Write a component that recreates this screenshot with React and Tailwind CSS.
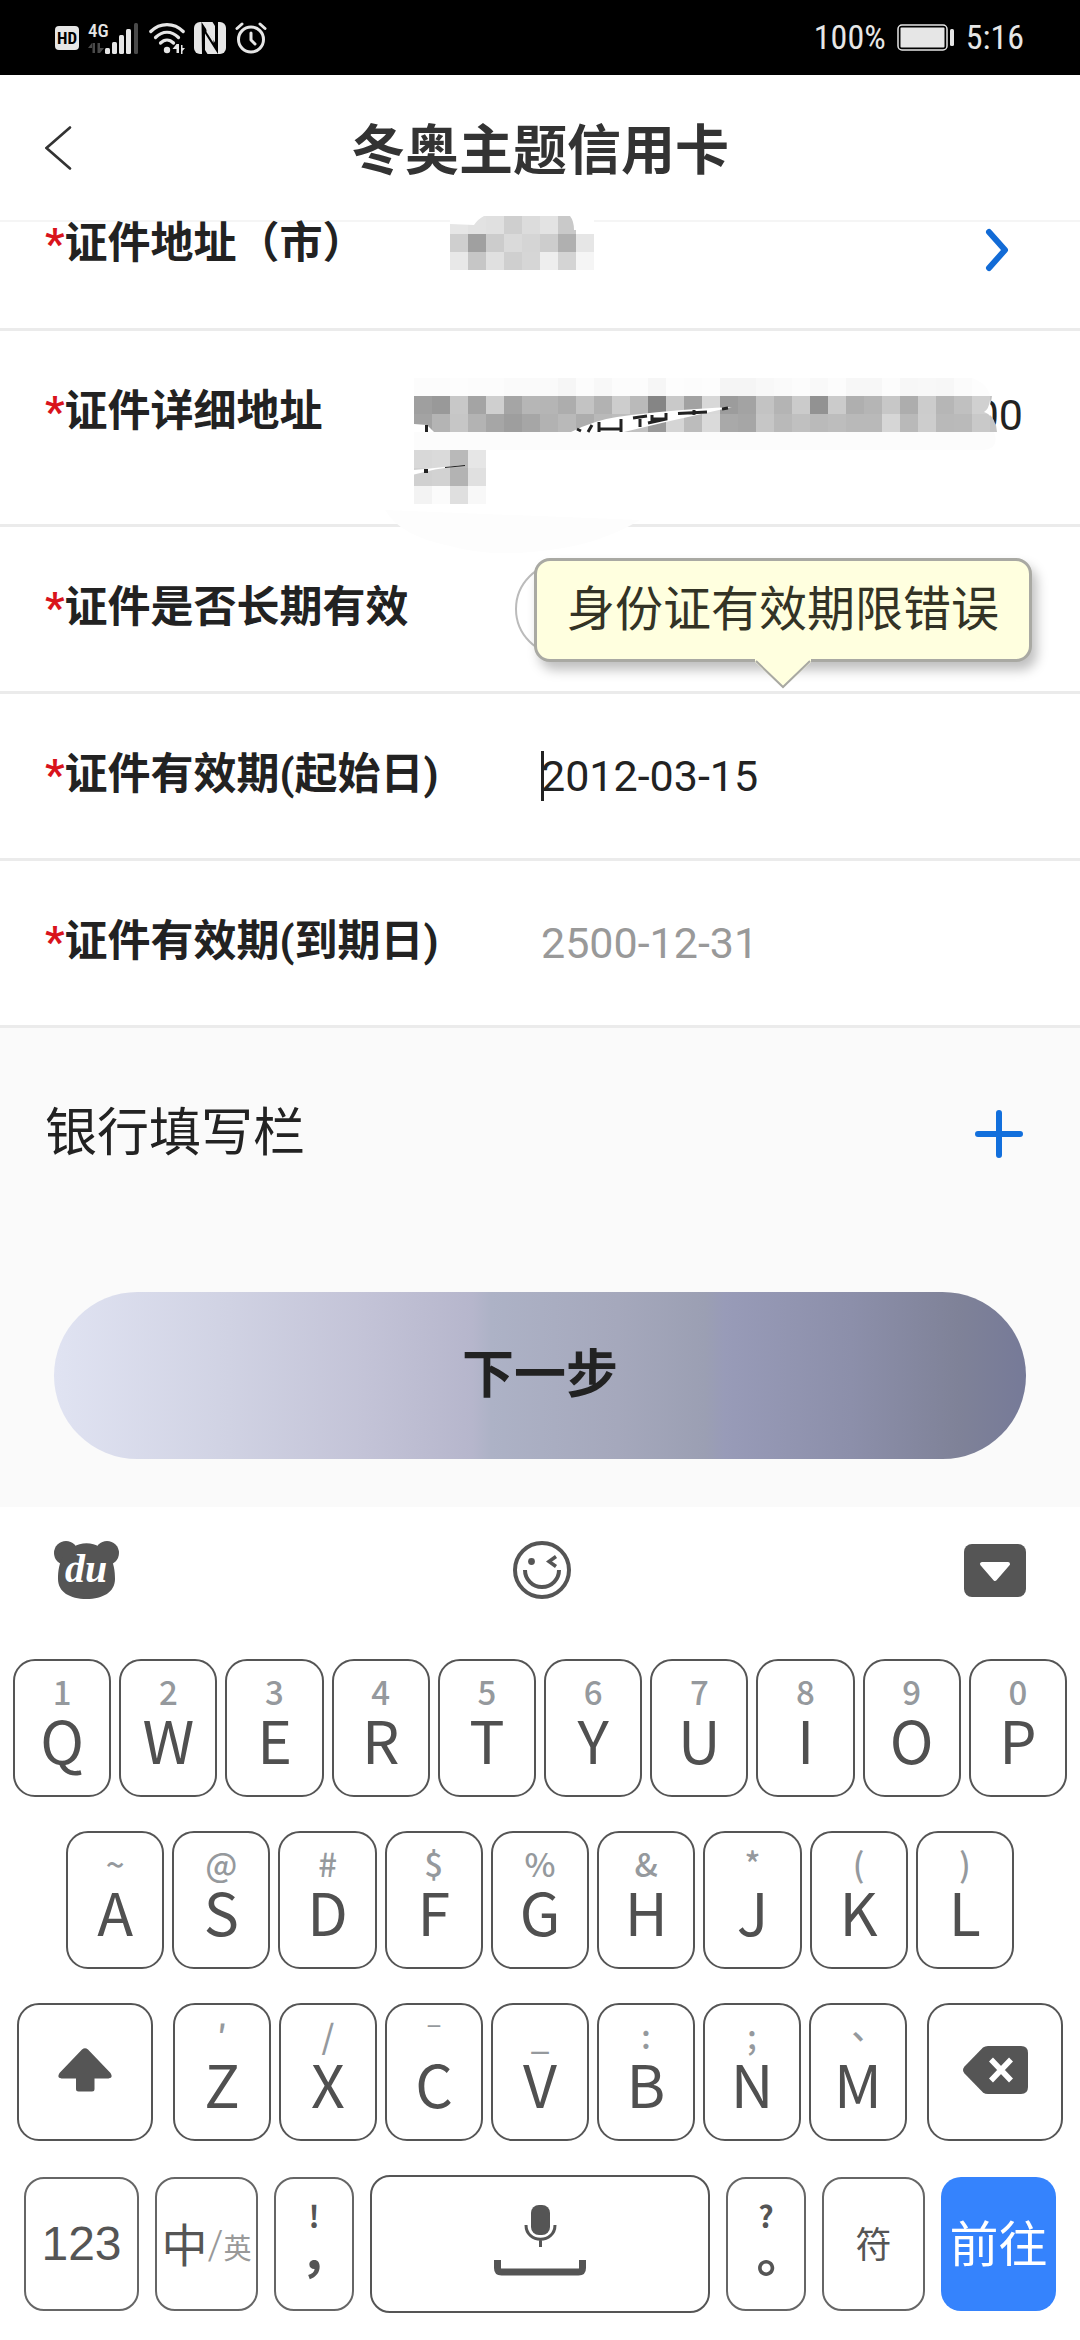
import React, { useState } from 'react';

const topKeys = [
  ['Q', '1'], ['W', '2'], ['E', '3'], ['R', '4'], ['T', '5'],
  ['Y', '6'], ['U', '7'], ['I', '8'], ['O', '9'], ['P', '0'],
];
const middleKeys = [
  ['A', '~'], ['S', '@'], ['D', '#'], ['F', '$'], ['G', '%'],
  ['H', '&'], ['J', '*'], ['K', '('], ['L', ')'],
];
const bottomKeys = [
  ['Z', '′'], ['X', '/'], ['C', 'ˉ'], ['V', '_'], ['B', ':'], ['N', ';'], ['M', '、'],
];

// grey shades of the masked values, one list per mosaic line
const cityMask = [
  ['e6', 'e2', 'e0', 'cf', 'dc', 'e3', 'c9'],
  ['cf', 'a0', 'cc', 'da', 'd5', 'cd', 'b0', 'e6'],
  ['e8', 'c6', 'e0', 'cf', 'd6', 'ee', 'd4', 'f5'],
];
const addressMask = [
  ['fc', 'fc', 'fd', 'fc', 'fc', 'fa', 'fa', 'fa', 'f6', 'fc', 'f8', 'fc', 'fc', 'f6', 'fd', 'fc', 'fd', 'f5', 'f5', 'f8', 'fa', 'fc', 'f9', 'fc', 'f7', 'f7', 'fc', 'f7', 'f8', 'f7', 'fb', 'fd'],
  ['9f', '99', 'c8', 'a4', 'cf', 'a5', 'b6', 'b5', 'ad', 'c3', 'b2', 'cd', 'ba', '85', 'c9', 'a2', 'd8', '9c', 'a3', 'c3', 'b4', 'cb', '92', 'cb', 'af', 'b5', 'c7', 'ad', 'cc', 'b6', 'c0', 'd0'],
  ['a3', 'b4', 'c6', 'b3', 'a6', '9e', 'a6', 'b2', 'b9', 'ad', 'b9', 'bd', 'c0', '99', 'd5', 'bc', 'da', 'a9', 'a6', 'c6', 'b9', 'c0', 'ba', 'bd', 'b9', 'b9', 'd6', 'b9', 'cd', 'b9', 'ba', 'c9'],
];
const addressMaskTail = [
  ['d8', 'da', 'b9', 'e6'],
  ['d0', 'd2', 'b3', 'e0'],
  ['f3', 'fb', 'df', 'f8'],
];

const Mosaic = ({ lines, x = 0, y = 0 }) =>
  lines.map((line, r) =>
    line.map((shade, c) => (
      <rect
        key={`${r}-${c}`}
        x={x + c * 18}
        y={y + r * 18}
        width="18"
        height="18"
        fill={`#${shade}${shade}${shade}`}
        shapeRendering="crispEdges"
      />
    ))
  );

const StatusBar = () => (
  <div className="flex h-[75px] items-center justify-between bg-black pr-14 pl-[55px] font-['Roboto_Condensed',Roboto,sans-serif] text-[#e6e6e6]">
    <div className="flex items-center gap-[9px]">
      <span className="flex h-6 w-6 items-center justify-center rounded-[4px] bg-[#e6e6e6] text-[17px] leading-[24px] font-bold text-black">
        HD
      </span>
      <svg className="h-8 w-[52px] overflow-visible" viewBox="0 0 52 32" fill="#e6e6e6">
        <text x="0" y="15" fontSize="19" fontWeight="500">4G</text>
        <path d="M4.5 21v10H7V21zM4 21l-4 5h4zM9.500 21v10H12V21zM12 31l4-5h-4z" fill="#4a4a4a" />
        <rect x="17" y="26" width="5" height="6" rx="1.500" />
        <rect x="24" y="20" width="5" height="12" rx="1.500" />
        <rect x="31" y="13" width="5" height="19" rx="1.500" />
        <rect x="38" y="7" width="5" height="25" rx="1.500" />
        <rect x="46" y="1" width="4" height="31" rx="1.500" fill="#4a4a4a" />
      </svg>
      <svg className="h-8 w-9" viewBox="0 0 36 32" fill="none" stroke="#e6e6e6" strokeWidth="3.200" strokeLinecap="round">
        <path d="M1.800 9.500C11 .3 25 .3 34.200 9.500" />
        <path d="M6.500 15.500c7-7 16-7 23 0" />
        <path d="M11.500 21c4-4 9-4 13 0" />
        <circle cx="18" cy="28" r="3.200" fill="#e6e6e6" stroke="none" />
        <path d="M27.500 22v9H30v-9zM27.500 22l-4 5h4zM32 23v9h1.500v-3L36 26h-2.500v-3z" fill="#e6e6e6" stroke="none" />
      </svg>
      <svg className="h-8 w-8" viewBox="0 0 32 32">
        <rect width="32" height="32" rx="6" fill="#e6e6e6" />
        <path d="M7.500 0L21 20.500V4l-2.500-4H24v32L11 11.500V28l2.500 4H8z" fill="#000" />
        <path d="M12.500 6.500v3.500l7 11v-3.500z" fill="#e6e6e6" />
      </svg>
      <svg className="h-8 w-8" viewBox="0 0 32 32" fill="none" stroke="#e6e6e6" strokeWidth="3" strokeLinecap="round" strokeLinejoin="round">
        <circle cx="16" cy="17.500" r="12.500" />
        <path d="M16 11v7l4 4M2 6.500l5-4.500M30 6.500L25 2" />
      </svg>
    </div>
    <div className="flex items-center gap-[11px] text-[34px]">
      <span>100%</span>
      <svg className="h-[27px] w-[58px]" viewBox="0 0 58 27">
        <rect x="1" y="1" width="49" height="25" rx="4" fill="none" stroke="#e6e6e6" strokeWidth="1.500" />
        <rect x="3.500" y="3.500" width="44" height="20" rx="1" fill="#e6e6e6" />
        <rect x="53" y="5" width="4" height="17" rx="1.500" fill="#e6e6e6" />
      </svg>
      <span>5:16</span>
    </div>
  </div>
);

const FieldLabel = ({ htmlFor, children }) => (
  <label htmlFor={htmlFor} className="pb-1 text-[43px] leading-[50px] font-bold whitespace-nowrap text-[#222]">
    <span className="text-[#d9131c]">*</span>
    {children}
  </label>
);

const LetterKey = ({ letter, hint }) => (
  <button
    type="button"
    aria-label={letter}
    className="flex h-[138px] min-w-0 flex-1 flex-col items-center rounded-[22px] border-2 border-[#555] bg-white pt-3"
  >
    <span className="h-9 font-['Noto_Sans_CJK_TC',sans-serif] text-[33px] leading-[36px] font-medium text-[#95999d]">{hint}</span>
    <span className="font-['Noto_Sans_CJK_SC',sans-serif] text-[59px] leading-[60px] text-[#505050]">{letter}</span>
  </button>
);

const SideKey = ({ label, children }) => (
  <button
    type="button"
    aria-label={label}
    className="flex h-[138px] items-center justify-center rounded-[22px] border-2 border-[#555] bg-white"
  >
    {children}
  </button>
);

const smallKey = 'flex h-[134px] items-center justify-center rounded-[20px] border-2 border-[#666] bg-white text-[#555]';

const Keyboard = () => (
  <section className="bg-white pb-[27px]">
    <div className="flex items-center justify-between px-[54px] pt-[34px] pb-[60px]">
      <button type="button" aria-label="百度输入法">
        <svg className="h-[58px] w-[65px]" viewBox="0 0 65 58">
          <g fill="#555">
            <circle cx="12" cy="12" r="12" />
            <circle cx="53" cy="12" r="12" />
            <path d="M20 6C26 1 39 1 45 6l10 8c5 8 6 16 6 24 0 13-12 20-28.500 20S4 51 4 38c0-8 1-16 6-24z" />
          </g>
          <text
            x="32"
            y="41"
            textAnchor="middle"
            fill="#fff"
            fontFamily="'Liberation Serif', serif"
            fontSize="40"
            fontWeight="bold"
            fontStyle="italic"
          >
            du
          </text>
        </svg>
      </button>
      <button type="button" aria-label="表情">
        <svg className="h-[58px] w-[58px]" viewBox="0 0 58 58" fill="none" stroke="#555" strokeWidth="4">
          <circle cx="29" cy="29" r="27" />
          <path d="M12 29c0 9 7 17 17 17s17-8 17-17" />
          <path d="M43 15.500l-7 5 7 5" strokeWidth="3.500" />
          <circle cx="18.500" cy="20.500" r="3.400" fill="#555" stroke="none" />
        </svg>
      </button>
      <button type="button" aria-label="收起键盘">
        <svg className="h-[53px] w-[62px]" viewBox="0 0 62 53">
          <rect width="62" height="53" rx="8" fill="#555" />
          <path d="M18 20h26L31 35z" fill="#fff" stroke="#fff" strokeWidth="4" strokeLinejoin="round" />
        </svg>
      </button>
    </div>

    <div className="flex flex-col gap-[34px]">
      <div className="flex gap-2 px-[13px]">
        {topKeys.map(([letter, hint]) => <LetterKey key={letter} letter={letter} hint={hint} />)}
      </div>
      <div className="flex gap-2 px-[66px]">
        {middleKeys.map(([letter, hint]) => <LetterKey key={letter} letter={letter} hint={hint} />)}
      </div>
      <div className="grid grid-cols-[136fr_734fr_136fr] gap-5 px-[17px]">
        <SideKey label="大写">
          <svg className="mb-1 h-[44px] w-[54px]" viewBox="0 0 54 44" fill="#555">
            <path d="M24 1.500q3-2.500 6 0L52.500 25q3 5-2 5.500H36.500V41q0 2.500-2.500 2.500H20.500Q18 43.500 18 41V30.500H3.500q-5-.5-2-5.500z" />
          </svg>
        </SideKey>
        <div className="flex gap-2">
          {bottomKeys.map(([letter, hint]) => <LetterKey key={letter} letter={letter} hint={hint} />)}
        </div>
        <SideKey label="删除">
          <svg className="mb-1 h-[48px] w-[65px]" viewBox="0 0 65 48">
            <path d="M20 1.500Q22 0 25 0h33q7 0 7 7v34q0 7-7 7H25q-3 0-5-1.500L1.500 27.500q-3-3.500 0-7z" fill="#555" />
            <path d="M28 13.500l20 21M48 13.500l-20 21" stroke="#fff" strokeWidth="5.500" />
          </svg>
        </SideKey>
      </div>
      <div className="grid grid-cols-[115fr_103fr_80fr_340fr_80fr_103fr_115fr] items-center gap-4 px-6">
        <button type="button" className={`${smallKey} font-['Liberation_Sans',sans-serif] text-[48px]`}>123</button>
        <button type="button" className={`${smallKey} pt-1 text-[46px]`}>
          中<span className="text-[40px] font-light text-[#999]">/</span>
          <span className="pt-2 text-[28px] text-[#999]">英</span>
        </button>
        <button type="button" className={`${smallKey} flex-col pb-2 font-['Noto_Sans_CJK_TC',sans-serif] font-bold`}>
          <span className="text-[30px] leading-[50px]">!</span>
          <span className="text-[50px] leading-[50px]">，</span>
        </button>
        <button
          type="button"
          aria-label="空格"
          className="flex h-[138px] items-center justify-center rounded-[20px] border-2 border-[#555] bg-white pb-2"
        >
          <svg className="h-[72px] w-[92px]" viewBox="0 0 92 72" fill="none" stroke="#555">
            <rect x="37" y="1" width="19" height="30" rx="8" fill="#555" stroke="none" />
            <path d="M32 21c0 19 29 19 29 0M46.500 35v8" strokeWidth="3" />
            <path d="M3.500 56v8q0 4 4 4h77q4 0 4-4v-8" strokeWidth="7" />
          </svg>
        </button>
        <button type="button" className={`${smallKey} flex-col pb-2 font-['Noto_Sans_CJK_TC',sans-serif] font-bold`}>
          <span className="text-[30px] leading-[50px]">?</span>
          <span className="text-[50px] leading-[50px]">。</span>
        </button>
        <button type="button" className={`${smallKey} pt-1 text-[36px]`}>符</button>
        <button type="button" className="flex h-[134px] items-center justify-center rounded-[20px] bg-[#3583fd] pt-1 text-[49px] whitespace-nowrap text-white">
          前往
        </button>
      </div>
    </div>
  </section>
);

const App = () => {
  const [startDate, setStartDate] = useState('2012-03-15');
  const [endDate, setEndDate] = useState('2500-12-31');

  return (
    <div className="min-h-screen bg-white font-[Roboto,'Noto_Sans_CJK_SC',sans-serif]">
      <StatusBar />

      <header className="grid h-[147px] grid-cols-[1fr_auto_1fr] items-center border-b-2 border-[#f5f5f5] px-[45px]">
        <button type="button" aria-label="返回" className="justify-self-start">
          <svg className="h-[44px] w-[27px]" viewBox="0 0 27 44" fill="none" stroke="#333" strokeWidth="2.600" strokeLinecap="round">
            <path d="M25 1.500L1.500 22 25 42.500" />
          </svg>
        </button>
        <h1 className="pt-2 text-[54px] leading-[64px] font-bold text-[#333]">冬奥主题信用卡</h1>
      </header>

      <form>
        <div className="flex h-[109px] items-start border-b-3 border-[#ebebeb] pr-[71px] pl-[45px]">
          <div className="-mt-1 w-[405px] shrink-0">
            <FieldLabel htmlFor="city">证件地址（市）</FieldLabel>
          </div>
          <button id="city" type="button" aria-label="选择证件地址（市）" className="flex flex-1 items-start justify-between">
            <svg className="-mt-[6px] h-[54px] w-36" viewBox="0 0 144 54">
              <Mosaic lines={cityMask} />
              <path d="M0 0h34q-6 3-10 9L0 8zM122 0h22v14h-20q0-9-4-14z" fill="#fff" />
            </svg>
            <svg className="mt-[6px] h-[44px] w-[24px]" viewBox="0 0 24 44" fill="none" stroke="#126bd6" strokeWidth="6" strokeLinecap="round" strokeLinejoin="round">
              <path d="M4 4l16 18L4 40" />
            </svg>
          </button>
        </div>

        <div className="relative flex h-[196px] items-start border-b-3 border-[#ebebeb] px-[45px] pt-[55px]">
          <FieldLabel htmlFor="address">证件详细地址</FieldLabel>
          <input
            id="address"
            defaultValue="00"
            className="ml-[80px] min-w-0 flex-1 bg-transparent pr-[12px] text-right text-[43px] leading-[58px] text-[#222] outline-none"
          />
          <svg className="absolute top-[47px] left-[385px] h-[180px] w-[640px]" viewBox="385 378 640 180">
            <path d="M385 510l255 10q-40 24-90 30-60 8-100-4-50-10-65-36z" fill="#fdfdfd" />
            <path d="M414 432h580q6 16-10 18H414z" fill="#fcfcfc" />
            <path d="M970 396h22q-1 10-6 16 10 6 11 20h-27z" fill="#c4c4c4" />
            <Mosaic lines={addressMask} x={414} y={378} />
            <path d="M990 378h-18q16 6 18 18zM990 400q-1 9-6 12 5 2 6 4z" fill="#fff" />
            <Mosaic lines={addressMaskTail} x={414} y={450} />
            <path d="M414 424l13 1 7 7h-20z" fill="#fff" />
            <path d="M571 432q24-12 46-15 50-7 115-10-30 7-62 14l-46 11z" fill="#fff" />
            <g fill="none" stroke="#222" strokeWidth="3">
              <path d="M426.500 425v7M577 429l4 2M592 425l-4 7M599 422v10M599 429h22M621 419v13" />
              <path d="M633 418l14-2M640 417v10M648 423l18-4v-6M652 415v9M653 419h13" />
              <path d="M678 413.500l29-1.500M694 410v5M722 409l6-1" />
            </g>
            <path d="M414 470l51-5-30 4.500-21 5z" fill="#fff" />
            <path d="M424 469h4v4h-4zM445 467l20-2v1l-20 2z" fill="#222" />
          </svg>
        </div>

        <div className="relative flex h-[167px] items-center border-b-3 border-[#ebebeb] px-[45px]">
          <FieldLabel htmlFor="longTerm">证件是否长期有效</FieldLabel>
          <input
            id="longTerm"
            type="checkbox"
            role="switch"
            className="ml-auto mr-[390px] h-[94px] w-[130px] shrink-0 appearance-none rounded-full border-2 border-[#bbb] bg-white"
          />
          <div
            role="alert"
            className="absolute top-[31px] right-12 z-10 rounded-2xl border-3 border-[#a9a9a3] bg-[#ffffdf] px-[30px] py-[19px] text-[48px] leading-[60px] whitespace-nowrap text-[#333325] shadow-[5px_8px_12px_rgba(0,0,0,0.25)]"
          >
            身份证有效期限错误
            <svg className="absolute top-full left-1/2 h-[30px] w-[56px] -translate-x-1/2" viewBox="0 0 56 30">
              <path d="M0 0h56v3L28 29 0 3z" fill="#ffffdf" />
              <path d="M1 2l27 26L55 2" fill="none" stroke="#a9a9a3" strokeWidth="2" />
            </svg>
          </div>
        </div>

        <div className="flex h-[167px] items-center border-b-3 border-[#ebebeb] px-[45px]">
          <div className="flex w-[496px] shrink-0">
            <FieldLabel htmlFor="startDate">证件有效期(起始日)</FieldLabel>
          </div>
          <div className="relative flex-1">
            <span className="absolute top-0 left-0 h-[50px] w-[3px] bg-[#222]" />
            <input
              id="startDate"
              value={startDate}
              onChange={(e) => setStartDate(e.target.value)}
              className="w-full text-[43px] leading-[50px] text-[#222] outline-none"
            />
          </div>
        </div>

        <div className="flex h-[167px] items-center border-b-3 border-[#ebebeb] px-[45px]">
          <div className="flex w-[496px] shrink-0">
            <FieldLabel htmlFor="endDate">证件有效期(到期日)</FieldLabel>
          </div>
          <input
            id="endDate"
            value={endDate}
            onChange={(e) => setEndDate(e.target.value)}
            className="w-full min-w-0 flex-1 text-[43px] leading-[50px] text-[#999] outline-none"
          />
        </div>

        <div className="bg-[#fafafa] pb-12">
          <div className="flex items-center justify-between pt-[76px] pr-[57px] pb-[68px] pl-[45px]">
            <h2 className="text-[52px] leading-[60px] text-[#222]">银行填写栏</h2>
            <button type="button" aria-label="展开">
              <svg className="h-12 w-12" viewBox="0 0 48 48" stroke="#126fdc" strokeWidth="6" strokeLinecap="round">
                <path d="M24 3v42M3 24h42" />
              </svg>
            </button>
          </div>
          <div className="px-[54px] pt-15">
            <button
              type="button"
              className="h-[167px] w-full rounded-full bg-[linear-gradient(90deg,#e0e3f2_0%,#d0d2e3_18%,#c3c3d7_32%,#b6b6cc_43%,#adb2c6_45%,#a5a8bc_58%,#9b9fb3_67%,#989bb8_69%,#8c8faa_82%,#7f8298_93%,#767a98_100%)] text-[52px] font-bold text-[#222]"
            >
              下一步
            </button>
          </div>
        </div>
      </form>

      <Keyboard />
    </div>
  );
};

export default App;
